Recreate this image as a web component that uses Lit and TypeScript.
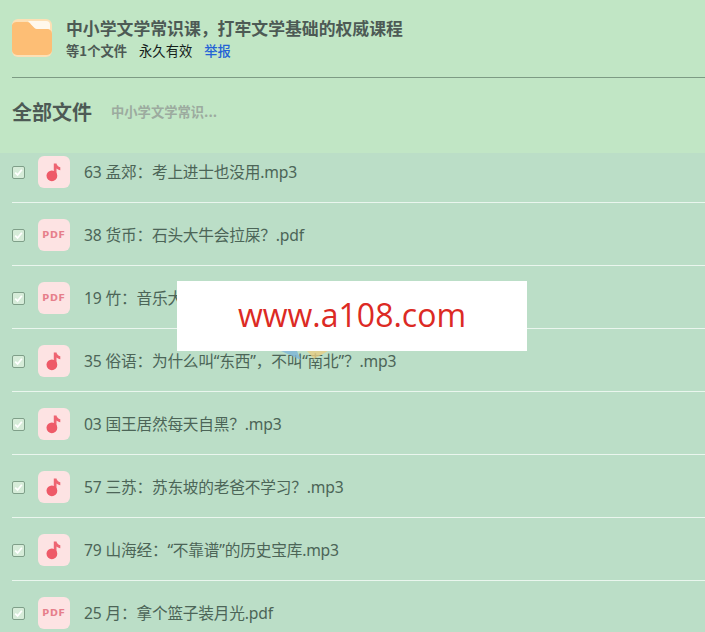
import { LitElement, html, css, svg } from "lit";
import { customElement } from "lit/decorators.js";

const files = [
  { name: "63 孟郊：考上进士也没用.mp3", kind: "mp3" },
  { name: "38 货币：石头大牛会拉屎？.pdf", kind: "pdf" },
  { name: "19 竹：音乐大", kind: "pdf" },
  { name: "35 俗语：为什么叫“东西”，不叫“南北”？.mp3", kind: "mp3" },
  { name: "03 国王居然每天自黑？.mp3", kind: "mp3" },
  { name: "57 三苏：苏东坡的老爸不学习？.mp3", kind: "mp3" },
  { name: "79 山海经：“不靠谱”的历史宝库.mp3", kind: "mp3" },
  { name: "25 月：拿个篮子装月光.pdf", kind: "pdf" },
];

const note = svg`<svg class="note" viewBox="0 0 32 32" width="32" height="32" aria-hidden="true">
  <path d="M15.800 7.500h2.700c.3 2 1.600 3.100 3.800 3.700v3c-1.600-.2-2.900-.8-3.800-1.700V20h-2.700z" fill="#ee6572"/>
  <circle cx="13.900" cy="19.800" r="5.400" fill="#ee5a68"/>
</svg>`;

@customElement("app-root")
export class AppRoot extends LitElement {
  static styles = css`
    :host {
      display: block;
      width: 705px;
      height: 632px;
      overflow: hidden;
      position: relative;
      font-family: "Noto Sans CJK SC", "Noto Sans", sans-serif;
      background: #bbdec7;
    }
    .head {
      height: 153px;
      box-sizing: border-box;
      background: #c1e6c5;
      padding: 0 0 0 12px;
      display: flex;
      flex-direction: column;
    }
    .top {
      height: 78px;
      box-sizing: border-box;
      border-bottom: 1px solid #7d9b84;
      display: flex;
      align-items: flex-start;
      padding-top: 19px;
      gap: 14px;
    }
    .folder { flex: none; display: block; filter: blur(0.5px); }
    .info { display: flex; flex-direction: column; }
    .title {
      font-size: 16.85px;
      line-height: 20px;
      font-weight: 700;
      color: #4d5a55;
      margin-top: -1px;
    }
    .meta {
      display: flex;
      gap: 12px;
      font-size: 13.3px;
      line-height: 18px;
      margin-top: 4px;
    }
    .count { color: #4d5a55; font-weight: 700; }
    .valid { color: #14201a; }
    .report { color: #2463d6; font-weight: 500; }
    .crumbs {
      display: flex;
      align-items: center;
      gap: 19px;
      height: 70px;
      padding-bottom: 4px;
      box-sizing: border-box;
    }
    .all {
      font-size: 20px;
      font-weight: 700;
      color: #4d5a55;
    }
    .crumb {
      font-size: 13.3px;
      font-weight: 700;
      color: #9cab9f;
    }
    .list {
      height: 479px;
      overflow: hidden;
    }
    .rows { margin: -13px 0 0 12px; }
    .row {
      height: 63px;
      box-sizing: border-box;
      border-bottom: 1px solid #eaf6ee;
      display: flex;
      align-items: center;
      padding-top: 1px;
    }
    .check {
      flex: none;
      width: 13px;
      height: 13px;
      box-sizing: border-box;
      border: 1px solid #7f9f89;
      border-radius: 2px;
      background: #d6ecd9;
      display: flex;
      align-items: center;
      justify-content: center;
      position: relative;
      top: 1px;
    }
    .badge {
      flex: none;
      width: 32px;
      height: 32px;
      margin-left: 13px;
      border-radius: 6px;
      background: #fde3e3;
      display: flex;
      align-items: center;
      justify-content: center;
    }
    .pdf {
      font-family: "DejaVu Sans", sans-serif;
      font-size: 9.500px;
      font-weight: 700;
      letter-spacing: 0.800px;
      color: #e67f8b;
    }
    .name {
      margin-left: 14px;
      font-family: "Noto Sans", "Noto Sans CJK SC", sans-serif;
      font-size: 15.700px;
      letter-spacing: -0.200px;
      color: #4c6557;
      white-space: nowrap;
    }
    .mark {
      position: absolute;
      left: 177px;
      top: 281px;
      width: 350px;
      height: 70px;
      box-sizing: border-box;
      padding-bottom: 3px;
      background: #fff;
      display: flex;
      align-items: center;
      justify-content: center;
      font-family: "Open Sans", sans-serif;
      font-size: 32px;
      color: #dc2a24;
    }
    .peek {
      position: absolute;
      left: 280px;
      top: 351px;
      display: block;
      opacity: 0.8;
    }
  `;

  render() {
    return html`
      <div class="head">
        <div class="top">
          <svg class="folder" width="40" height="38" viewBox="0 0 40 38" aria-hidden="true">
            <rect x="0" y="0" width="40" height="38" rx="6" fill="#fde0b5"/>
            <path d="M16 2h18a4 4 0 0 1 4 4v6H24z" fill="#fff8ec"/>
            <path d="M0 6a5 5 0 0 1 5-3h10c2 0 3 1 4 2.500l3 3c1 1 2 1.500 4 1.500h9c3 0 5 2 5 5v16a5 5 0 0 1-5 5H5a5 5 0 0 1-5-5z" fill="#fdbe75"/>
          </svg>
          <div class="info">
            <div class="title">中小学文学常识课，打牢文学基础的权威课程</div>
            <div class="meta">
              <span class="count">等1个文件</span>
              <span class="valid">永久有效</span>
              <span class="report">举报</span>
            </div>
          </div>
        </div>
        <div class="crumbs">
          <span class="all">全部文件</span>
          <span class="crumb">中小学文学常识...</span>
        </div>
      </div>
      <div class="list">
        <div class="rows">
          ${files.map(
            (f) => html`<div class="row">
              <span class="check">
                <svg width="9" height="9" viewBox="0 0 9 9" aria-hidden="true"><path d="M1.200 4.600 3.600 7 7.800 1.800" fill="none" stroke="#fff" stroke-width="1.800"/></svg>
              </span>
              <span class="badge">${f.kind === "mp3" ? note : html`<span class="pdf">PDF</span>`}</span>
              <span class="name">${f.name}</span>
            </div>`
          )}
        </div>
      </div>
      <svg class="peek" width="60" height="10" viewBox="0 0 60 10" aria-hidden="true">
        <path d="M1 0h16l4 9z" fill="#7fb6d8"/>
        <path d="M27 0h21l-14 8z" fill="#e8cf86"/>
      </svg>
      <div class="mark">www.a108.com</div>
    `;
  }
}
